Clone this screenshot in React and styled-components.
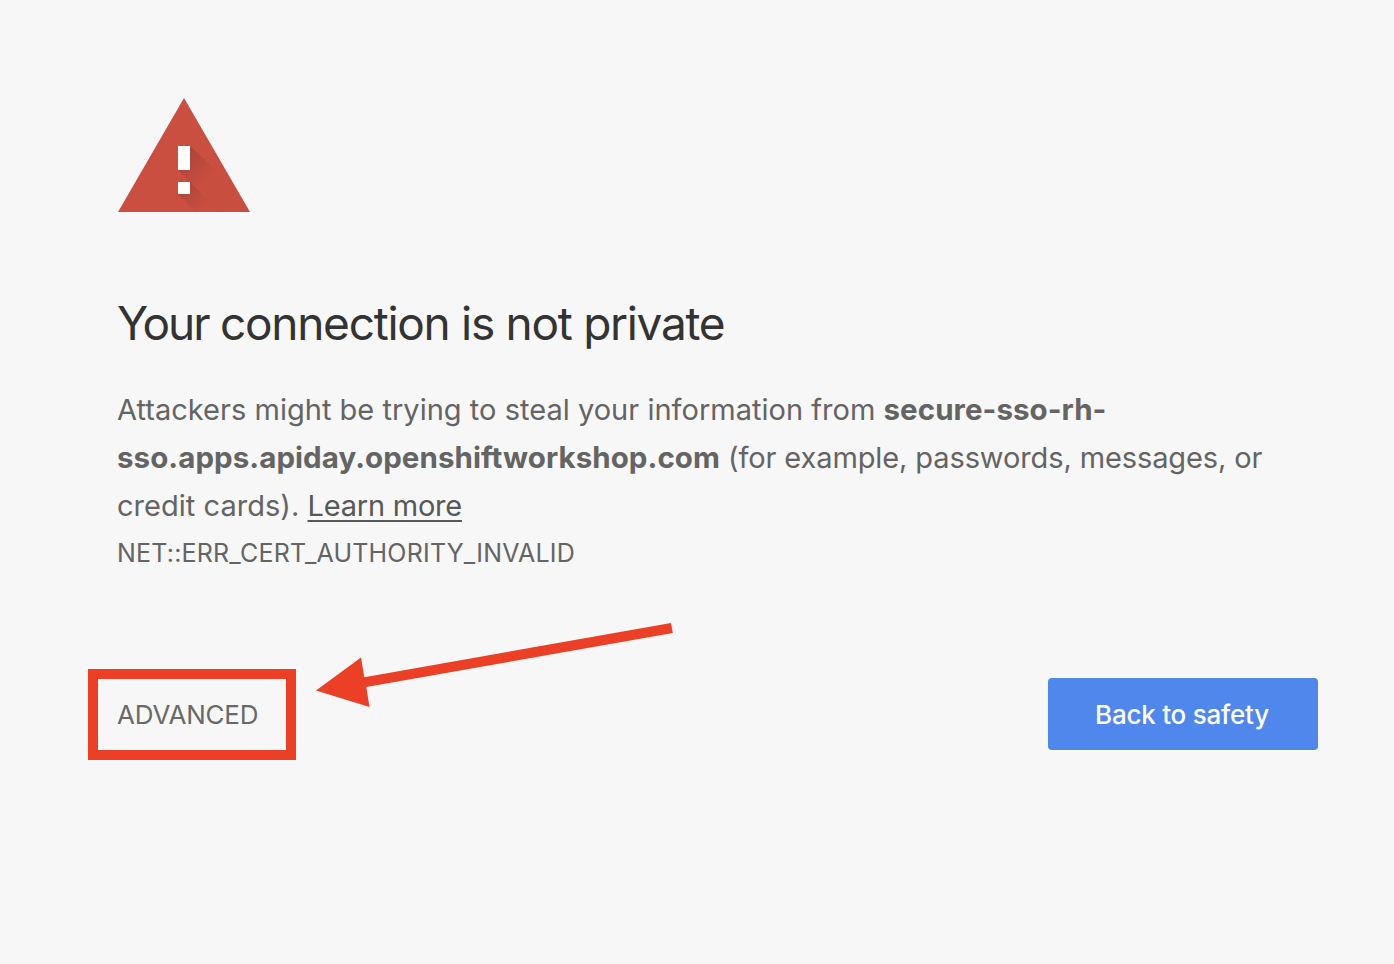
import React from 'react';
import styled, { createGlobalStyle } from 'styled-components';

const GlobalStyle = createGlobalStyle`
  body { margin: 0; background: #f7f7f7; color: #646464; font-family: Inter, sans-serif; overflow: hidden; }
`;
const Page = styled.main`
  position: relative;
  box-sizing: border-box;
  height: 964px;
  padding: 98px 76px 0 117px;
`;
const WarningIcon = styled.svg`
  display: block;
  width: 132px;
  height: 114px;
  margin-left: 1px;
`;
const Title = styled.h1`
  margin: 83px 0 0;
  font-size: 46px;
  font-weight: 400;
  line-height: 56px;
  letter-spacing: -1.29px;
  color: #333;
  white-space: nowrap;
`;
const FirstWord = styled.span`
  letter-spacing: -2.1px;
`;
const Message = styled.p`
  margin: 35px 0 0;
  font-size: 29px;
  line-height: 48px;
`;
const Line = styled.span`
  display: block;
  height: 48px;
  width: max-content;
  white-space: pre;
  letter-spacing: ${(p) => p.$spacing || 0}px;
`;
const Host = styled.strong`
  font-size: 29.5px;
  font-weight: 700;
  line-height: 1;
  letter-spacing: 0.06px;
`;
const Learn = styled.a`
  color: #585858;
  letter-spacing: -0.22px;
  text-decoration: underline;
  text-decoration-thickness: 2px;
  text-underline-offset: 4px;
`;
const ErrorCode = styled.div`
  width: max-content;
  font-size: 25px;
  line-height: 46px;
  letter-spacing: 0.2px;
`;
const Actions = styled.div`
  display: flex;
  justify-content: space-between;
  align-items: flex-start;
  height: 91px;
  margin: 93px 0 0 -29px;
`;
const Advanced = styled.button`
  box-sizing: border-box;
  width: 208px;
  height: 91px;
  padding: 0 0 0 19px;
  border: 10px solid #eb4026;
  background: transparent;
  color: #696969;
  font: 400 26px Inter, sans-serif;
  text-align: left;
  letter-spacing: -0.2px;
`;
const Safety = styled.button`
  width: 270px;
  height: 72px;
  margin-top: 9px;
  padding: 0 2px 0 0;
  border: 0;
  border-radius: 4px;
  background: #4f87ed;
  color: #fff;
  font: 500 26px Inter, sans-serif;
  letter-spacing: -0.23px;
`;
const Arrow = styled.svg`
  position: absolute;
  left: 310px;
  top: 615px;
  width: 370px;
  height: 100px;
`;

export default function App() {
  return (
    <>
      <GlobalStyle />
      <Page>
        <WarningIcon viewBox="0 0 132 114">
          <defs>
            <linearGradient id="barShade" x1="65" y1="59" x2="87" y2="81" gradientUnits="userSpaceOnUse">
              <stop offset="0" stopColor="#3e2723" stopOpacity="0.23" />
              <stop offset="1" stopColor="#3e2723" stopOpacity="0.02" />
            </linearGradient>
            <linearGradient id="dotShade" x1="65" y1="89" x2="84" y2="108" gradientUnits="userSpaceOnUse">
              <stop offset="0" stopColor="#3e2723" stopOpacity="0.23" />
              <stop offset="1" stopColor="#3e2723" stopOpacity="0.02" />
            </linearGradient>
          </defs>
          <path d="M66 0 132 114H0Z" fill="#cb4f40" />
          <path d="M72 48 118 90 132 114H102L60 72Z" fill="url(#barShade)" />
          <path d="M72 84 102 114H78L60 96Z" fill="url(#dotShade)" />
          <path d="M60 48h12v24H60zM60 84h12v12H60z" fill="#fff" />
        </WarningIcon>
        <Title><FirstWord>Your</FirstWord> connection is not private</Title>
        <Message>
          <Line $spacing={0.02}>Attackers might be trying to steal your information from <Host>secure-sso-rh-</Host></Line>
          <Line $spacing={-0.11}><Host>sso.apps.apiday.openshiftworkshop.com</Host> (for example, passwords, messages, or</Line>
          <Line $spacing={0.03}>credit cards). <Learn>Learn more</Learn></Line>
        </Message>
        <ErrorCode>NET::ERR_CERT_AUTHORITY_INVALID</ErrorCode>
        <Actions>
          <Advanced>ADVANCED</Advanced>
          <Safety>Back to safety</Safety>
        </Actions>
        <Arrow viewBox="310 615 370 100">
          <path d="M671 623 672.8 633 366.3 687 369.5 707 316 690.5 361 657.5 364.3 677.3Z" fill="#eb4026" />
        </Arrow>
      </Page>
    </>
  );
}
